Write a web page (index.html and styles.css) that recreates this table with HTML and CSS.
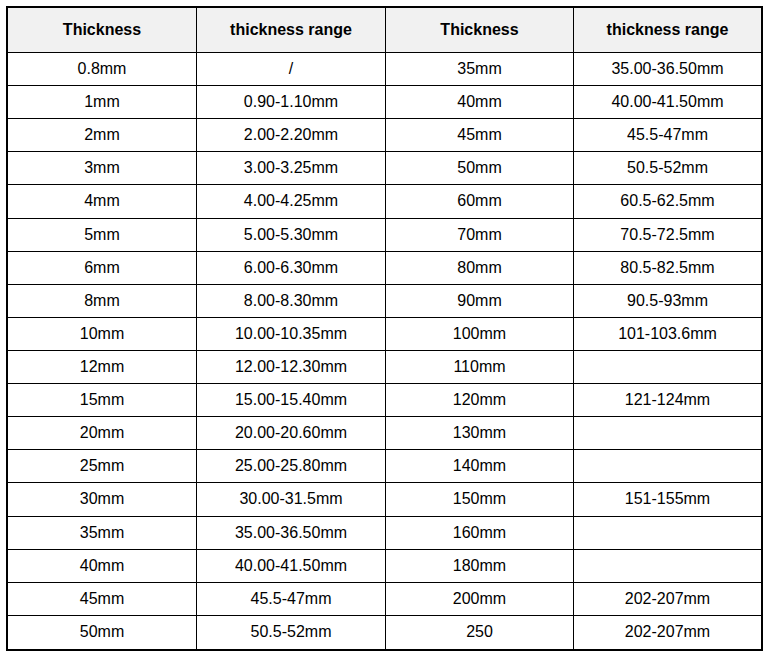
FILE: index.html
```html
<!DOCTYPE html>
<html>
<head>
<meta charset="utf-8">
<link rel="stylesheet" href="styles.css">
</head>
<body>
<table class="spec">
  <colgroup>
    <col class="c1"><col class="c2"><col class="c3"><col class="c4">
  </colgroup>
  <thead>
    <tr class="head"><th>Thickness</th><th>thickness range</th><th>Thickness</th><th>thickness range</th></tr>
  </thead>
  <tbody>
    <tr><td>0.8mm</td><td>/</td><td>35mm</td><td>35.00-36.50mm</td></tr>
    <tr><td>1mm</td><td>0.90-1.10mm</td><td>40mm</td><td>40.00-41.50mm</td></tr>
    <tr><td>2mm</td><td>2.00-2.20mm</td><td>45mm</td><td>45.5-47mm</td></tr>
    <tr><td>3mm</td><td>3.00-3.25mm</td><td>50mm</td><td>50.5-52mm</td></tr>
    <tr><td>4mm</td><td>4.00-4.25mm</td><td>60mm</td><td>60.5-62.5mm</td></tr>
    <tr><td>5mm</td><td>5.00-5.30mm</td><td>70mm</td><td>70.5-72.5mm</td></tr>
    <tr><td>6mm</td><td>6.00-6.30mm</td><td>80mm</td><td>80.5-82.5mm</td></tr>
    <tr><td>8mm</td><td>8.00-8.30mm</td><td>90mm</td><td>90.5-93mm</td></tr>
    <tr><td>10mm</td><td>10.00-10.35mm</td><td>100mm</td><td>101-103.6mm</td></tr>
    <tr><td>12mm</td><td>12.00-12.30mm</td><td>110mm</td><td></td></tr>
    <tr><td>15mm</td><td>15.00-15.40mm</td><td>120mm</td><td>121-124mm</td></tr>
    <tr><td>20mm</td><td>20.00-20.60mm</td><td>130mm</td><td></td></tr>
    <tr><td>25mm</td><td>25.00-25.80mm</td><td>140mm</td><td></td></tr>
    <tr><td>30mm</td><td>30.00-31.5mm</td><td>150mm</td><td>151-155mm</td></tr>
    <tr><td>35mm</td><td>35.00-36.50mm</td><td>160mm</td><td></td></tr>
    <tr><td>40mm</td><td>40.00-41.50mm</td><td>180mm</td><td></td></tr>
    <tr><td>45mm</td><td>45.5-47mm</td><td>200mm</td><td>202-207mm</td></tr>
    <tr class="last"><td>50mm</td><td>50.5-52mm</td><td>250</td><td>202-207mm</td></tr>
  </tbody>
</table>
</body>
</html>
```

FILE: styles.css
```css
html, body {
  margin: 0;
  padding: 0;
  background: #ffffff;
}

body {
  font-family: "Liberation Sans", Arial, sans-serif;
  font-size: 16px;
  color: #000000;
}

.spec {
  margin: 6px 0 0 6px;
  border: 2px solid #000000;
  border-collapse: separate;
  border-spacing: 0;
  table-layout: fixed;
  width: 757px;
}

.c1 { width: 189px; }
.c2 { width: 189px; }
.c3 { width: 188px; }
.c4 { width: 187px; }

.spec th,
.spec td {
  padding: 0;
  text-align: center;
  vertical-align: middle;
  border-right: 1px solid #000000;
  border-bottom: 1px solid #000000;
  box-sizing: border-box;
  line-height: 18px;
}

.spec th:last-child,
.spec td:last-child {
  border-right: none;
}

.spec .last td {
  border-bottom: none;
}

.head th {
  height: 45px;
  background: #f1f1f1;
  font-weight: bold;
  padding-bottom: 1px;
}

.spec tbody tr {
  height: 33.11px;
}

.spec tbody td {
  height: 33.11px;
}

.spec tbody tr.last td {
  height: 32.11px;
}
```
